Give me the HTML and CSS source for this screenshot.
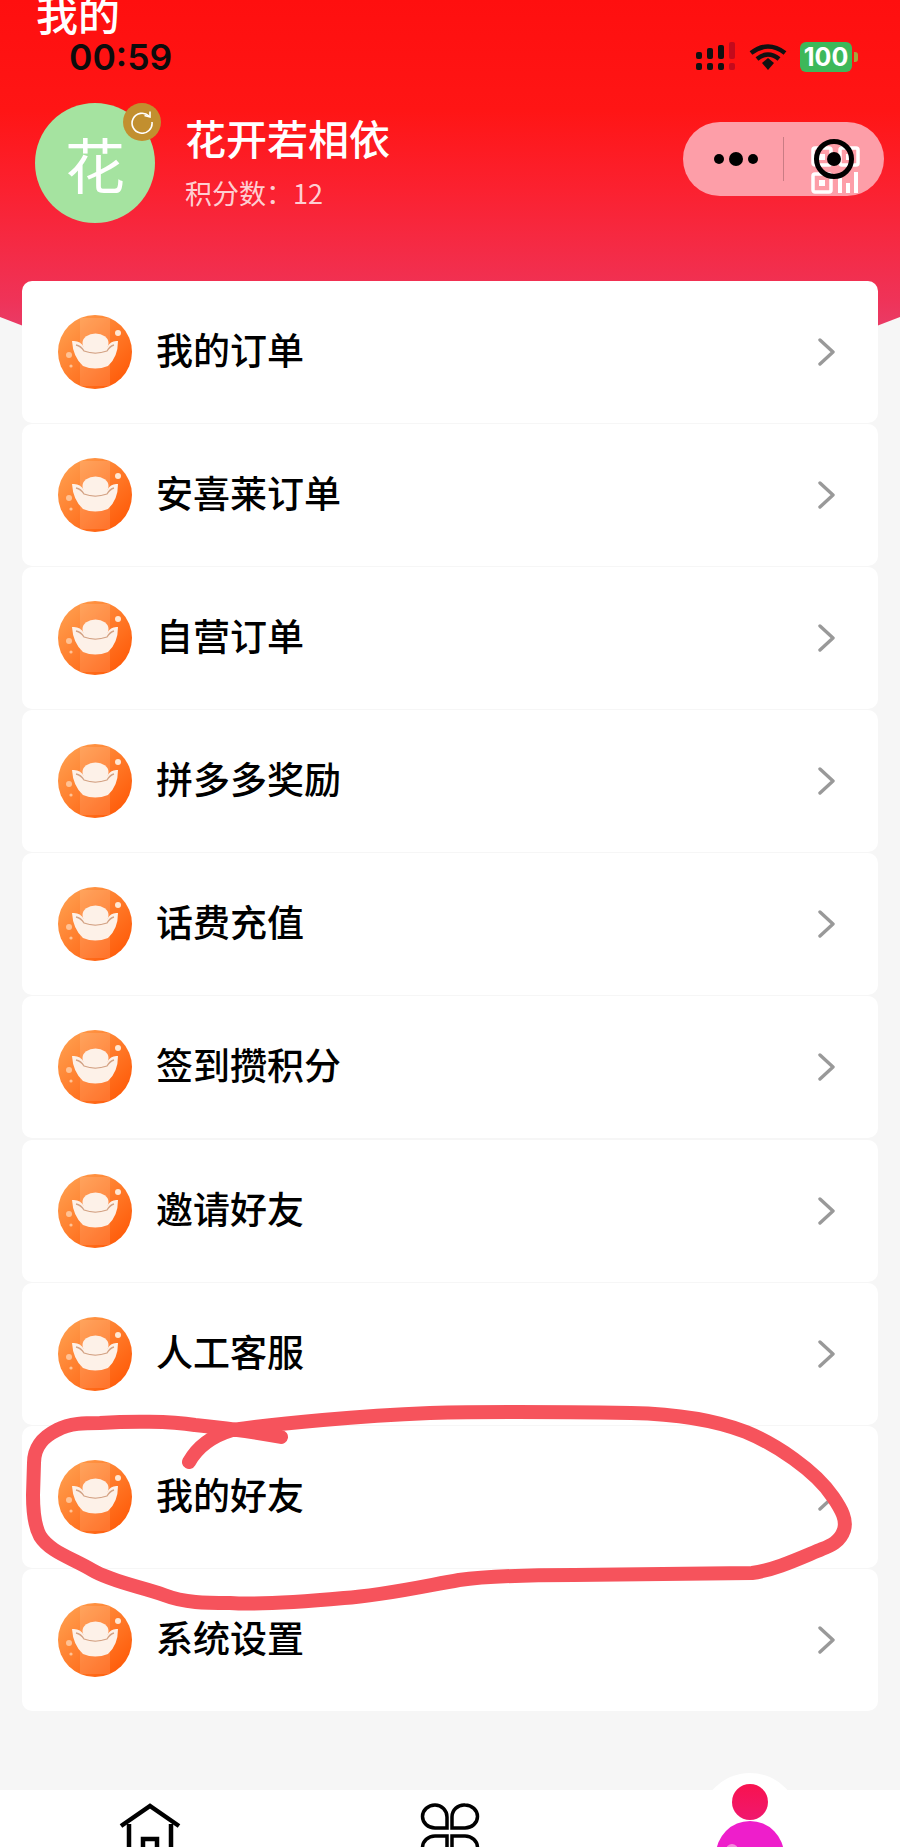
FILE: index.html
```html
<!DOCTYPE html>
<html lang="zh-CN">
<head>
  <meta charset="UTF-8" />
  <meta name="viewport" content="width=device-width,initial-scale=1.0" />
  <title>我的</title>
  <link rel="stylesheet" href="styles.css">
</head>
<body>
  <svg class="defs" width="0" height="0">
    <defs>
      <linearGradient id="ingotBg" x1="0" y1="0" x2="1" y2="1">
        <stop offset="0" stop-color="#ffa555" />
        <stop offset="1" stop-color="#ff5200" />
      </linearGradient>
      <linearGradient id="headFill" x1="0" y1="0" x2="0" y2="1">
        <stop offset="0" stop-color="#f8124f" />
        <stop offset="1" stop-color="#f0186e" />
      </linearGradient>
      <symbol id="ingot" viewBox="0 0 74 74">
        <circle cx="37" cy="37" r="37" fill="url(#ingotBg)" />
        <path d="M22 3 H52 V71 H22 Z" fill="#fff" opacity="0.12" />
        <path d="M14 26 Q22 25 26 32 L49 32 Q53 25 60 26 Q60 42 50 51 Q37 56 25 51 Q15 42 14 26 Z" fill="#fdf1e8" />
        <path d="M18 30 Q23 31 26 36 Q37 40 49 36 Q52 31 56 30" fill="none" stroke="#d3a284" stroke-width="1.300" />
        <ellipse cx="37.500" cy="28" rx="13" ry="9.500" fill="#fdf1e8" />
        <circle cx="60" cy="18" r="3" fill="#ffe6d2" />
        <circle cx="11" cy="40" r="3" fill="#ffc295" />
        <circle cx="13" cy="51" r="1.600" fill="#ffc295" />
      </symbol>
      <symbol id="chevron" viewBox="0 0 18 28">
        <path d="M2 2 L15 14 L2 26" fill="none" stroke="#999" stroke-width="3.400" stroke-linecap="round" stroke-linejoin="round" />
      </symbol>
    </defs>
  </svg>

  <header class="hero">
    <h1 class="hero-title">我的</h1>

    <div class="status-bar">
      <span class="clock">00:59</span>
      <div class="status-icons">
        <svg class="signal" width="40" height="30" viewBox="0 0 40 30">
          <rect x="0" y="10" width="6" height="7" rx="2" fill="#111" />
          <rect x="11" y="6" width="6" height="11" rx="2" fill="#111" />
          <rect x="22" y="3" width="6" height="14" rx="2" fill="#111" />
          <rect x="33" y="0" width="6" height="17" rx="2" fill="#c40a1c" />
          <rect x="0" y="21" width="6" height="7" rx="2" fill="#111" />
          <rect x="11" y="21" width="6" height="7" rx="2" fill="#111" />
          <rect x="22" y="21" width="6" height="7" rx="2" fill="#111" />
          <rect x="33" y="21" width="6" height="7" rx="2" fill="#c40a1c" />
        </svg>
        <svg class="wifi" width="38" height="28" viewBox="0 0 38 28">
          <path d="M2 10 Q19 -3 36 10" fill="none" stroke="#111" stroke-width="4.500" />
          <path d="M8 16 Q19 7 30 16" fill="none" stroke="#111" stroke-width="4.500" />
          <path d="M13 20 L19 15 L25 20 L19 27 Z" fill="#111" />
        </svg>
        <div class="battery">
          <span class="battery-level">100</span>
          <span class="battery-nub"></span>
        </div>
      </div>
    </div>

    <div class="profile">
      <div class="avatar">
        花
        <span class="avatar-badge">
          <svg width="24" height="24" viewBox="0 0 24 24">
            <path d="M19 6 A10 10 0 1 0 22 12" fill="none" stroke="#fff" stroke-width="1.600" />
            <path d="M14.500 5.500 L20 7 L20 1.500" fill="none" stroke="#fff" stroke-width="1.600" />
          </svg>
        </span>
      </div>
      <div class="profile-text">
        <div class="profile-name">花开若相依</div>
        <div class="profile-score">积分数：12</div>
      </div>
    </div>

    <div class="capsule">
      <svg class="qr" width="50" height="50" viewBox="0 0 50 50">
        <g fill="none" stroke="#fff" stroke-width="3.500">
          <rect x="2" y="3" width="18" height="17" rx="2" />
          <rect x="29" y="3" width="18" height="17" rx="2" />
          <rect x="2" y="29" width="18" height="18" rx="2" />
        </g>
        <g fill="#fff">
          <rect x="8" y="9" width="6" height="6" />
          <rect x="35" y="9" width="6" height="6" />
          <rect x="8" y="35" width="6" height="6" />
          <rect x="27" y="31" width="4" height="17" />
          <rect x="35" y="38" width="4" height="10" />
          <rect x="43" y="27" width="4" height="21" />
        </g>
      </svg>
      <div class="capsule-dots">
        <span class="dot"></span>
        <span class="dot dot-big"></span>
        <span class="dot"></span>
      </div>
      <span class="capsule-line"></span>
      <div class="capsule-target"><span></span></div>
    </div>
  </header>

  <ul class="menu">
    <li class="menu-item"><svg class="menu-icon"><use href="#ingot" /></svg><span class="menu-label">我的订单</span><svg class="menu-arrow"><use href="#chevron" /></svg></li>
    <li class="menu-item"><svg class="menu-icon"><use href="#ingot" /></svg><span class="menu-label">安喜莱订单</span><svg class="menu-arrow"><use href="#chevron" /></svg></li>
    <li class="menu-item"><svg class="menu-icon"><use href="#ingot" /></svg><span class="menu-label">自营订单</span><svg class="menu-arrow"><use href="#chevron" /></svg></li>
    <li class="menu-item"><svg class="menu-icon"><use href="#ingot" /></svg><span class="menu-label">拼多多奖励</span><svg class="menu-arrow"><use href="#chevron" /></svg></li>
    <li class="menu-item"><svg class="menu-icon"><use href="#ingot" /></svg><span class="menu-label">话费充值</span><svg class="menu-arrow"><use href="#chevron" /></svg></li>
    <li class="menu-item"><svg class="menu-icon"><use href="#ingot" /></svg><span class="menu-label">签到攒积分</span><svg class="menu-arrow"><use href="#chevron" /></svg></li>
    <li class="menu-item"><svg class="menu-icon"><use href="#ingot" /></svg><span class="menu-label">邀请好友</span><svg class="menu-arrow"><use href="#chevron" /></svg></li>
    <li class="menu-item"><svg class="menu-icon"><use href="#ingot" /></svg><span class="menu-label">人工客服</span><svg class="menu-arrow"><use href="#chevron" /></svg></li>
    <li class="menu-item"><svg class="menu-icon"><use href="#ingot" /></svg><span class="menu-label">我的好友</span><svg class="menu-arrow"><use href="#chevron" /></svg></li>
    <li class="menu-item"><svg class="menu-icon"><use href="#ingot" /></svg><span class="menu-label">系统设置</span><svg class="menu-arrow"><use href="#chevron" /></svg></li>
  </ul>

  <nav class="tabbar">
    <div class="tab">
      <svg width="62" height="64" viewBox="0 0 62 64">
        <path d="M2 23 L31 3 L60 23" fill="none" stroke="#000" stroke-width="4.500" />
        <path d="M10 21 V64 M52 21 V64" fill="none" stroke="#000" stroke-width="4.500" />
        <rect x="24" y="36" width="14" height="28" fill="none" stroke="#000" stroke-width="4.500" />
      </svg>
    </div>
    <div class="tab">
      <svg width="60" height="60" viewBox="0 0 60 60">
        <g fill="none" stroke="#000" stroke-width="3.500">
          <path d="M27 25 H15 A12.500 11.500 0 0 1 15 2 A12 12 0 0 1 27 14 Z" />
          <path d="M32 25 H45 A12.500 11.500 0 0 0 45 2 A12 12 0 0 0 32 14 Z" />
          <path d="M27 33 H15 A12.500 11.500 0 0 0 15 56 A12 12 0 0 0 27 44 Z" />
          <path d="M32 33 H45 A12.500 11.500 0 0 1 45 56 A12 12 0 0 1 32 44 Z" />
        </g>
      </svg>
    </div>
    <div class="tab tab-active">
      <span class="tab-bump"></span>
      <svg class="tab-person" width="72" height="90" viewBox="0 0 72 90">
        <circle cx="36" cy="18" r="18" fill="url(#headFill)" />
        <circle cx="36" cy="71" r="34" fill="#ee1ecb" />
        <circle cx="18" cy="66" r="6" fill="#f58add" />
      </svg>
    </div>
  </nav>

  <svg class="scribble" width="900" height="1847" viewBox="0 0 900 1847">
    <path d="M189 1462 C198 1446 212 1436 232 1430 C280 1423 360 1416 430 1413 C500 1411 570 1412 631 1413 C680 1414 715 1420 746 1432 C775 1444 815 1470 833 1497 C842 1510 847 1520 844 1530 C840 1542 830 1546 822 1549 C800 1558 775 1570 752 1573 C690 1574 630 1574 574 1575 C520 1575 480 1577 459 1580 C420 1587 380 1596 344 1598 C300 1602 260 1605 230 1603 C205 1603 185 1603 164 1595 C143 1587 112 1582 92 1570 C72 1558 50 1552 40 1536 C34 1525 33 1510 33 1495 L34 1463 C34 1445 45 1436 57 1430 C70 1423 85 1423 100 1423 C130 1421 170 1421 195 1425 C225 1428 255 1432 281 1437" fill="none" stroke="#f6535c" stroke-width="14" stroke-linecap="round" stroke-linejoin="round" />
  </svg>
</body>
</html>
```

FILE: styles.css
```css
* {
  box-sizing: border-box;
}

body {
  margin: 0;
  height: 100vh;
  overflow: hidden;
  position: relative;
  display: flex;
  flex-direction: column;
  background: #f6f6f6;
  font-family: "Noto Sans CJK SC", "Noto Sans", sans-serif;
}

.defs {
  position: absolute;
}

/* header */
.hero {
  position: relative;
  height: 281px;
  flex-shrink: 0;
}

.hero::before {
  content: "";
  position: absolute;
  top: 0;
  left: 0;
  right: 0;
  height: 400px;
  clip-path: path("M0 0 H900 V317 Q450 497 0 317 Z");
  background: linear-gradient(180deg, #ff0f0f 0, #ff1515 110px, #fb2130 190px, #ef3358 300px, #d9508c 400px);
}

.hero > * {
  position: relative;
}

.hero-title {
  margin: -9px 0 0 36px;
  height: 43px;
  font-size: 42px;
  line-height: 43px;
  font-weight: 500;
  color: #fff;
}

.status-bar {
  display: flex;
  justify-content: space-between;
  align-items: center;
  height: 40px;
  margin-top: 3px;
  padding: 0 42px 0 69px;
}

.clock {
  font-family: Inter, "Liberation Sans", sans-serif;
  font-size: 35.5px;
  font-weight: 600;
  color: #0c0c0c;
}

.status-icons {
  display: flex;
  align-items: center;
  gap: 13px;
}

.battery {
  display: flex;
  align-items: center;
  gap: 2px;
}

.battery-level {
  width: 52px;
  height: 30px;
  border-radius: 6px;
  background: #3db85a;
  color: #fff;
  font-family: Inter, "Liberation Sans", sans-serif;
  font-size: 25px;
  font-weight: 700;
  line-height: 30px;
  text-align: center;
}

.battery-nub {
  width: 4px;
  height: 10px;
  border-radius: 0 3px 3px 0;
  background: #a5a53a;
}

.profile {
  display: flex;
  align-items: center;
  gap: 30px;
  margin: 26px 0 0 35px;
}

.avatar {
  position: relative;
  width: 120px;
  height: 120px;
  border-radius: 50%;
  background: #a5e3a0;
  color: #fff;
  font-size: 60px;
  line-height: 120px;
  text-align: center;
}

.avatar-badge {
  position: absolute;
  top: 0;
  right: -6px;
  width: 38px;
  height: 38px;
  border-radius: 50%;
  background: #c28f2f;
  display: flex;
  align-items: center;
  justify-content: center;
}

.profile-text {
  margin-top: -5px;
}

.profile-name {
  font-size: 41px;
  line-height: 56px;
  font-weight: 500;
  color: #fff;
}

.profile-score {
  margin-top: 9px;
  font-size: 27px;
  line-height: 38px;
  color: rgba(255, 255, 255, 0.8);
}

/* wechat capsule */
.hero > .capsule {
  position: absolute;
  top: 122px;
  left: 683px;
  width: 201px;
  height: 74px;
  border-radius: 37px;
  background: #fd9ea8;
  display: flex;
  align-items: center;
}

.qr {
  position: absolute;
  top: 23px;
  left: 128px;
}

.capsule-dots {
  display: flex;
  align-items: center;
  gap: 5px;
  margin-left: 31px;
}

.dot {
  width: 10px;
  height: 10px;
  border-radius: 50%;
  background: #000;
}

.dot-big {
  width: 14px;
  height: 14px;
}

.capsule-line {
  width: 1px;
  height: 44px;
  margin-left: 25px;
  background: #c97c84;
}

.capsule-target {
  position: relative;
  width: 40px;
  height: 40px;
  margin-left: 30px;
  border: 5px solid #000;
  border-radius: 50%;
  display: flex;
  align-items: center;
  justify-content: center;
}

.capsule-target span {
  width: 14px;
  height: 14px;
  border-radius: 50%;
  background: #000;
}

/* menu */
.menu {
  position: relative;
  flex: 1;
  list-style: none;
  margin: 0 22px;
  padding: 0;
  display: flex;
  flex-direction: column;
  gap: 1.1px;
}

.menu-item {
  display: flex;
  align-items: center;
  height: 142px;
  flex-shrink: 0;
  padding: 0 42px 0 36px;
  border-radius: 10px;
  background: #fff;
}

.menu-icon {
  width: 74px;
  height: 74px;
  flex-shrink: 0;
}

.menu-label {
  flex: 1;
  margin-left: 24px;
  padding-bottom: 6px;
  font-size: 37px;
  font-weight: 500;
  color: #000;
}

.menu-arrow {
  width: 18px;
  height: 28px;
  flex-shrink: 0;
}

/* bottom bar */
.tabbar {
  position: relative;
  height: 57px;
  flex-shrink: 0;
  background: #fff;
  display: flex;
}

.tab {
  position: relative;
  flex: 1;
  display: flex;
  justify-content: center;
  padding-top: 13px;
}

.tab-bump {
  position: absolute;
  top: -17px;
  left: 100px;
  width: 100px;
  height: 100px;
  border-radius: 50%;
  background: #fff;
}

.tab-person {
  position: relative;
  margin-top: -19px;
}

/* red marker ring drawn on the screenshot */
.scribble {
  position: absolute;
  top: 0;
  left: 0;
  pointer-events: none;
}
```
